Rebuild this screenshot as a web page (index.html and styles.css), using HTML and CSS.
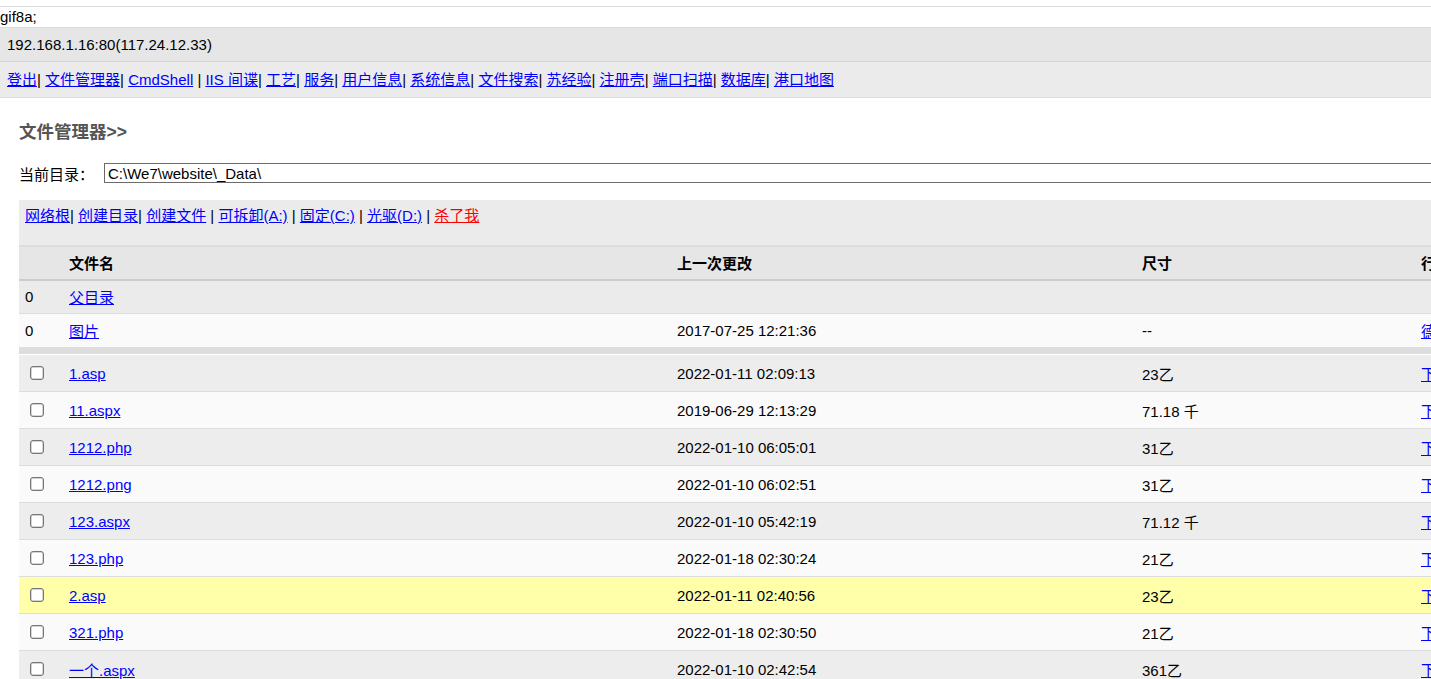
FILE: index.html
```html
<!DOCTYPE html>
<html lang="zh">
<head>
<meta charset="utf-8">
<title>文件管理器</title>
<link rel="stylesheet" href="styles.css">
</head>
<body>
<div class="topline"></div>
<div class="gif">gif8a;</div>
<div class="host">192.168.1.16:80(117.24.12.33)</div>
<div class="nav">
  <a href="#">登出</a>| <a href="#">文件管理器</a>| <a href="#">CmdShell</a> | <a href="#">IIS 间谍</a>| <a href="#">工艺</a>| <a href="#">服务</a>| <a href="#">用户信息</a>| <a href="#">系统信息</a>| <a href="#">文件搜索</a>| <a href="#">苏经验</a>| <a href="#">注册壳</a>| <a href="#">端口扫描</a>| <a href="#">数据库</a>| <a href="#">港口地图</a>
</div>
<div class="main">
  <h3 class="title">文件管理器&gt;&gt;</h3>
  <div class="dir">
    <span class="dir-label">当前目录：</span>
    <input class="dir-input" type="text" value="C:\We7\website\_Data\">
  </div>
  <div class="panel">
    <div class="toolbar">
      <a href="#">网络根</a>| <a href="#">创建目录</a>| <a href="#">创建文件</a> | <a href="#">可拆卸(A:)</a> | <a href="#">固定(C:)</a> | <a href="#">光驱(D:)</a> | <a href="#" class="kill">杀了我</a>
    </div>
    <div class="row head">
      <div class="cell first"></div>
      <div class="cell">文件名</div>
      <div class="cell">上一次更改</div>
      <div class="cell">尺寸</div>
      <div class="cell">行动</div>
    </div>
    <div class="row dirrow parent">
      <div class="cell first">0</div>
      <div class="cell"><a href="#">父目录</a></div>
      <div class="cell"></div>
      <div class="cell"></div>
      <div class="cell"></div>
    </div>
    <div class="row dirrow pics">
      <div class="cell first">0</div>
      <div class="cell"><a href="#">图片</a></div>
      <div class="cell">2017-07-25 12:21:36</div>
      <div class="cell">--</div>
      <div class="cell"><a href="#">德尔</a> | <a href="#">改名</a></div>
    </div>
    <div class="sep"></div>
    <div class="row file odd">
      <div class="cell first"><input type="checkbox" class="chk"></div>
      <div class="cell"><a href="#">1.asp</a></div>
      <div class="cell">2022-01-11 02:09:13</div>
      <div class="cell">23乙</div>
      <div class="cell"><a href="#">下载</a> | <a href="#">复制</a></div>
    </div>
    <div class="row file even">
      <div class="cell first"><input type="checkbox" class="chk"></div>
      <div class="cell"><a href="#">11.aspx</a></div>
      <div class="cell">2019-06-29 12:13:29</div>
      <div class="cell">71.18 千</div>
      <div class="cell"><a href="#">下载</a> | <a href="#">复制</a></div>
    </div>
    <div class="row file odd">
      <div class="cell first"><input type="checkbox" class="chk"></div>
      <div class="cell"><a href="#">1212.php</a></div>
      <div class="cell">2022-01-10 06:05:01</div>
      <div class="cell">31乙</div>
      <div class="cell"><a href="#">下载</a> | <a href="#">复制</a></div>
    </div>
    <div class="row file even">
      <div class="cell first"><input type="checkbox" class="chk"></div>
      <div class="cell"><a href="#">1212.png</a></div>
      <div class="cell">2022-01-10 06:02:51</div>
      <div class="cell">31乙</div>
      <div class="cell"><a href="#">下载</a> | <a href="#">复制</a></div>
    </div>
    <div class="row file odd">
      <div class="cell first"><input type="checkbox" class="chk"></div>
      <div class="cell"><a href="#">123.aspx</a></div>
      <div class="cell">2022-01-10 05:42:19</div>
      <div class="cell">71.12 千</div>
      <div class="cell"><a href="#">下载</a> | <a href="#">复制</a></div>
    </div>
    <div class="row file even">
      <div class="cell first"><input type="checkbox" class="chk"></div>
      <div class="cell"><a href="#">123.php</a></div>
      <div class="cell">2022-01-18 02:30:24</div>
      <div class="cell">21乙</div>
      <div class="cell"><a href="#">下载</a> | <a href="#">复制</a></div>
    </div>
    <div class="row file hover">
      <div class="cell first"><input type="checkbox" class="chk"></div>
      <div class="cell"><a href="#">2.asp</a></div>
      <div class="cell">2022-01-11 02:40:56</div>
      <div class="cell">23乙</div>
      <div class="cell"><a href="#">下载</a> | <a href="#">复制</a></div>
    </div>
    <div class="row file even">
      <div class="cell first"><input type="checkbox" class="chk"></div>
      <div class="cell"><a href="#">321.php</a></div>
      <div class="cell">2022-01-18 02:30:50</div>
      <div class="cell">21乙</div>
      <div class="cell"><a href="#">下载</a> | <a href="#">复制</a></div>
    </div>
    <div class="row file odd">
      <div class="cell first"><input type="checkbox" class="chk"></div>
      <div class="cell"><a href="#">一个.aspx</a></div>
      <div class="cell">2022-01-10 02:42:54</div>
      <div class="cell">361乙</div>
      <div class="cell"><a href="#">下载</a> | <a href="#">复制</a></div>
    </div>
  </div>
</div>
</body>
</html>
```
FILE: styles.css
```css
html {
  overflow: hidden;
}
body {
  margin: 0;
  font-family: "Liberation Sans", Arial, "Noto Sans CJK SC", sans-serif;
  font-size: 15px;
  color: #000;
  background: #fff;
}
a {
  color: #0000ff;
  text-decoration: underline;
}
.topline {
  height: 6px;
  border-bottom: 1px solid #dddddd;
}
.gif {
  height: 20px;
  line-height: 20px;
}
.host {
  border-top: 1px solid #dcdcdc;
  background: #e6e6e6;
  height: 33px;
  line-height: 33px;
  padding-left: 7px;
}
.nav {
  border-top: 1px solid #d4d4d4;
  border-bottom: 1px solid #dcdcdc;
  background: #ebebeb;
  height: 35px;
  line-height: 35px;
  padding-left: 7px;
  white-space: nowrap;
}
.main {
  padding: 24px 0 0 19px;
}
.title {
  margin: 0;
  font-size: 17.5px;
  line-height: 20px;
  font-weight: bold;
  color: #555555;
}
.dir {
  display: flex;
  align-items: center;
  margin-top: 21px;
  height: 20px;
}
.dir-label {
  width: 85px;
  flex: none;
}
.dir-input {
  flex: none;
  width: 1500px;
  height: 20px;
  box-sizing: border-box;
  margin: 0;
  padding: 0 3px;
  border: 1px solid #6b6b6b;
  font: inherit;
  color: #000;
  background: #fff;
}
.panel {
  margin-top: 17px;
  width: 1640px;
}
.toolbar {
  background: #ebebeb;
  height: 45px;
  box-sizing: border-box;
  padding: 7px 0 0 6px;
  line-height: 18px;
  white-space: nowrap;
}
.toolbar .kill {
  color: #ff0000;
}
.row {
  display: grid;
  grid-template-columns: 50px 608px 465px 279px 238px;
  align-items: center;
  white-space: nowrap;
}
.cell.first {
  padding-left: 6px;
  display: flex;
  align-items: center;
}
.head {
  background: #e6e6e6;
  border-top: 2px solid #dddddd;
  border-bottom: 2px solid #cccccc;
  font-weight: bold;
  padding-bottom: 1px;
  box-sizing: border-box;
  height: 36px;
}
.dirrow {
  border-bottom: 1px solid #dddddd;
}
.parent {
  background: #ebebeb;
  padding-bottom: 1px;
  box-sizing: border-box;
  height: 33px;
}
.pics {
  background: #fafafa;
  height: 33px;
  border-bottom: none;
}
.sep {
  height: 7px;
  background: #dddddd;
  border-bottom: 1px solid #ffffff;
}
.file {
  border-bottom: 1px solid #dddddd;
  box-sizing: border-box;
  height: 37px;
}
.odd {
  background: #ededed;
}
.even {
  background: #fafafa;
}
.hover {
  background: #ffffaa;
}
.chk {
  appearance: none;
  -webkit-appearance: none;
  margin: 0 0 0 5px;
  width: 14px;
  height: 14px;
  box-sizing: border-box;
  border: 1px solid #767676;
  border-radius: 3px;
  background: #ffffff;
  box-shadow: inset 0 0 0 0.5px rgba(118, 118, 118, 0.6);
}
```
